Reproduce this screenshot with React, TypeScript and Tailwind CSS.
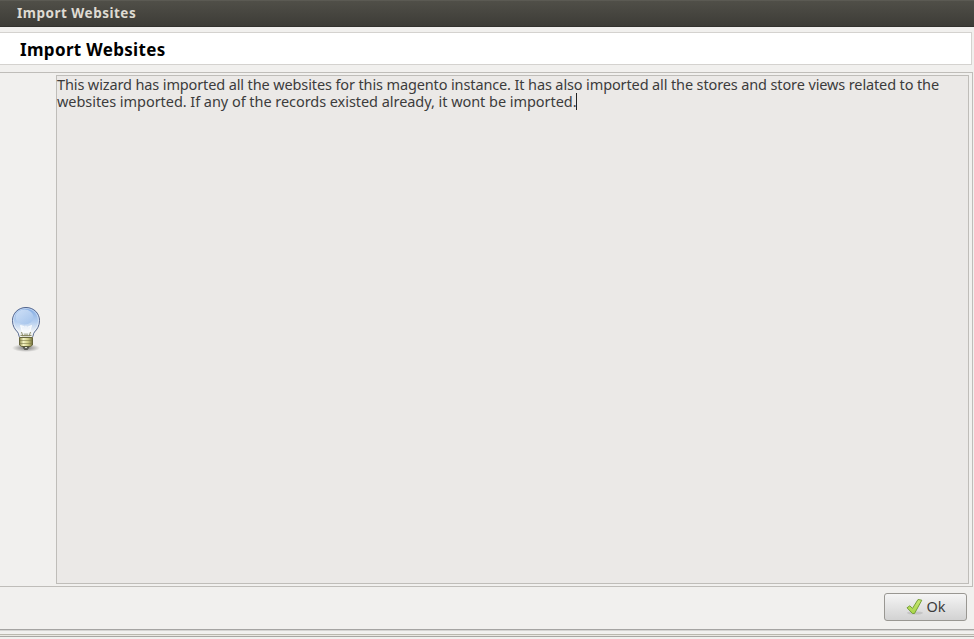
function Bulb() {
  return (
    <svg width="36" height="50" viewBox="0 0 36 50" aria-hidden="true">
      <defs>
        <linearGradient id="glass" x1="0" y1="0" x2="0" y2="1">
          <stop offset="0" stopColor="#7fa9e2" />
          <stop offset="0.5" stopColor="#b9d1f0" />
          <stop offset="0.8" stopColor="#eef2f6" />
          <stop offset="1" stopColor="#e6e7de" />
        </linearGradient>
        <linearGradient id="shine" x1="0" y1="0" x2="0.6" y2="1">
          <stop offset="0" stopColor="#e0ecfb" />
          <stop offset="1" stopColor="#a5c4ec" />
        </linearGradient>
        <linearGradient id="cap" x1="0" y1="0" x2="1" y2="0">
          <stop offset="0" stopColor="#8b894c" />
          <stop offset="0.3" stopColor="#f5f4c4" />
          <stop offset="0.65" stopColor="#cfcd88" />
          <stop offset="1" stopColor="#74723a" />
        </linearGradient>
        <radialGradient id="shade">
          <stop offset="0" stopColor="#000" stopOpacity="0.5" />
          <stop offset="1" stopColor="#000" stopOpacity="0" />
        </radialGradient>
      </defs>
      <ellipse cx="18" cy="45" rx="14" ry="4" fill="url(#shade)" />
      <path
        d="M18 4.5C10 4.5 4.5 10.500 4.500 17.500C4.500 23 7 26.500 9.500 29C11 30.500 10.500 33.500 12 34.500H24C25.500 33.500 25 30.500 26.500 29C29 26.500 31.500 23 31.500 17.500C31.500 10.500 26 4.500 18 4.500Z"
        fill="url(#glass)"
        stroke="#52648c"
      />
      <path
        d="M18 5.500C10.700 5.500 5.500 11 5.500 17.500C5.500 22.500 8 26 10.300 28.300C12 30 11.500 32.500 12.500 33.500H23.500C24.500 32.500 24 30 25.700 28.300C28 26 30.500 22.500 30.500 17.500C30.500 11 25.300 5.500 18 5.500Z"
        fill="none"
        stroke="#fff"
        strokeOpacity="0.45"
      />
      <ellipse cx="16.500" cy="14" rx="9" ry="7.500" fill="url(#shine)" opacity="0.8" />
      <path d="M14.500 30L12.500 22.500L16 23.500L18 22.500L20 24L24 22L21.500 30Z" fill="#fff" fillOpacity="0.55" />
      <path d="M14.500 29L12.500 22.500L16 23.500M21.500 29L23.500 22.500L20 24" fill="none" stroke="#fff" strokeWidth="0.8" />
      <path d="M15 33.500L13.500 29M17 33.500V30.500M19 33.500V30.500M21 33.500L22.500 29M12.500 32.500H23.500" stroke="#85845f" fill="none" strokeWidth="0.9" />
      <path d="M11.500 34.500H24.500V42L22.500 43.500H13.500L11.500 42Z" fill="url(#cap)" stroke="#66643b" />
      <path d="M12 37.500H24M12 40.500H24" stroke="#7d7b48" strokeWidth="0.6" />
      <path d="M15 44H21L19.500 46.500H16.500Z" fill="#666760" stroke="#494a44" strokeWidth="0.7" />
      <path d="M17 44.500H19" stroke="#deded6" />
    </svg>
  );
}

function Check() {
  return (
    <svg width="22" height="22" viewBox="0 0 22 22" aria-hidden="true">
      <defs>
        <linearGradient id="green" x1="0" y1="0" x2="0" y2="1">
          <stop offset="0" stopColor="#c9e774" />
          <stop offset="1" stopColor="#a8d648" />
        </linearGradient>
      </defs>
      <ellipse cx="11" cy="17" rx="8" ry="1.600" fill="#000" opacity="0.1" />
      <path
        d="M3 11.800L5.800 9.800L8.500 12.400L14 3.500L17.800 4.200L10.500 17.500H8.500Z"
        fill="url(#green)"
        stroke="#769f39"
        strokeLinejoin="round"
      />
    </svg>
  );
}

export default function App() {
  return (
    <div className="flex h-[639px] w-[974px] flex-col overflow-hidden bg-[#f1f0ee] font-['Noto_Sans',sans-serif] text-[#3c3c3c]">
      <header className="flex h-[27px] shrink-0 items-center border-t border-b border-t-[#5b5a53] border-b-[#33322e] bg-linear-to-b from-[#504f48] to-[#3d3c37] pl-[17px]">
        <h1 className="text-[13.500px] leading-none font-bold tracking-[0.500px] whitespace-nowrap text-[#dfdbd2]">
          Import Websites
        </h1>
      </header>
      <div className="mt-[5px] mr-[2px] flex h-[33px] shrink-0 items-center border-y border-r border-[#d4d2cf] bg-white pt-[2px] pl-5">
        <h2 className="text-[17px] leading-none font-bold tracking-[0.330px] whitespace-nowrap text-black">
          Import Websites
        </h2>
      </div>
      <main className="mt-[7px] mr-px flex h-[515px] shrink-0 border-y border-r border-[#bfbdb9]">
        <div className="flex w-14 items-center pb-[3px] pl-2">
          <Bulb />
        </div>
        <div className="mt-[2px] mr-[3px] mb-[2px] flex-1 border border-[#bfbdb9] bg-[#ebe9e7] text-[14.500px] leading-[17px] whitespace-nowrap">
          <p className="tracking-[-0.125px]">
            This wizard has imported all the websites for this magento instance. It has also imported all the stores and store views related to the
          </p>
          <p className="flex items-center tracking-[-0.050px]">
            websites imported. If any of the records existed already, it wont be imported.
            <span className="h-[17px] w-px bg-[#222]" />
          </p>
        </div>
      </main>
      <footer className="flex h-[42px] shrink-0 justify-end pt-[6px] pr-[7px]">
        <button className="flex h-[28px] w-[83px] items-center justify-center rounded-[3px] border border-[#999792] bg-linear-to-b from-[#f5f5f5] to-[#d2d2d2] pr-px text-[14.500px] leading-none">
          <Check />
          <span className="pb-[2px]">Ok</span>
        </button>
      </footer>
      <div className="h-[2px] shrink-0 border-t border-[#a5a4a2] bg-[#d5d4d2]" />
      <div className="mt-[3px] h-[3px] shrink-0 border-y border-t-[#bbb9af] border-b-[#a9a8a3] bg-[#e9e8e3]" />
    </div>
  );
}
